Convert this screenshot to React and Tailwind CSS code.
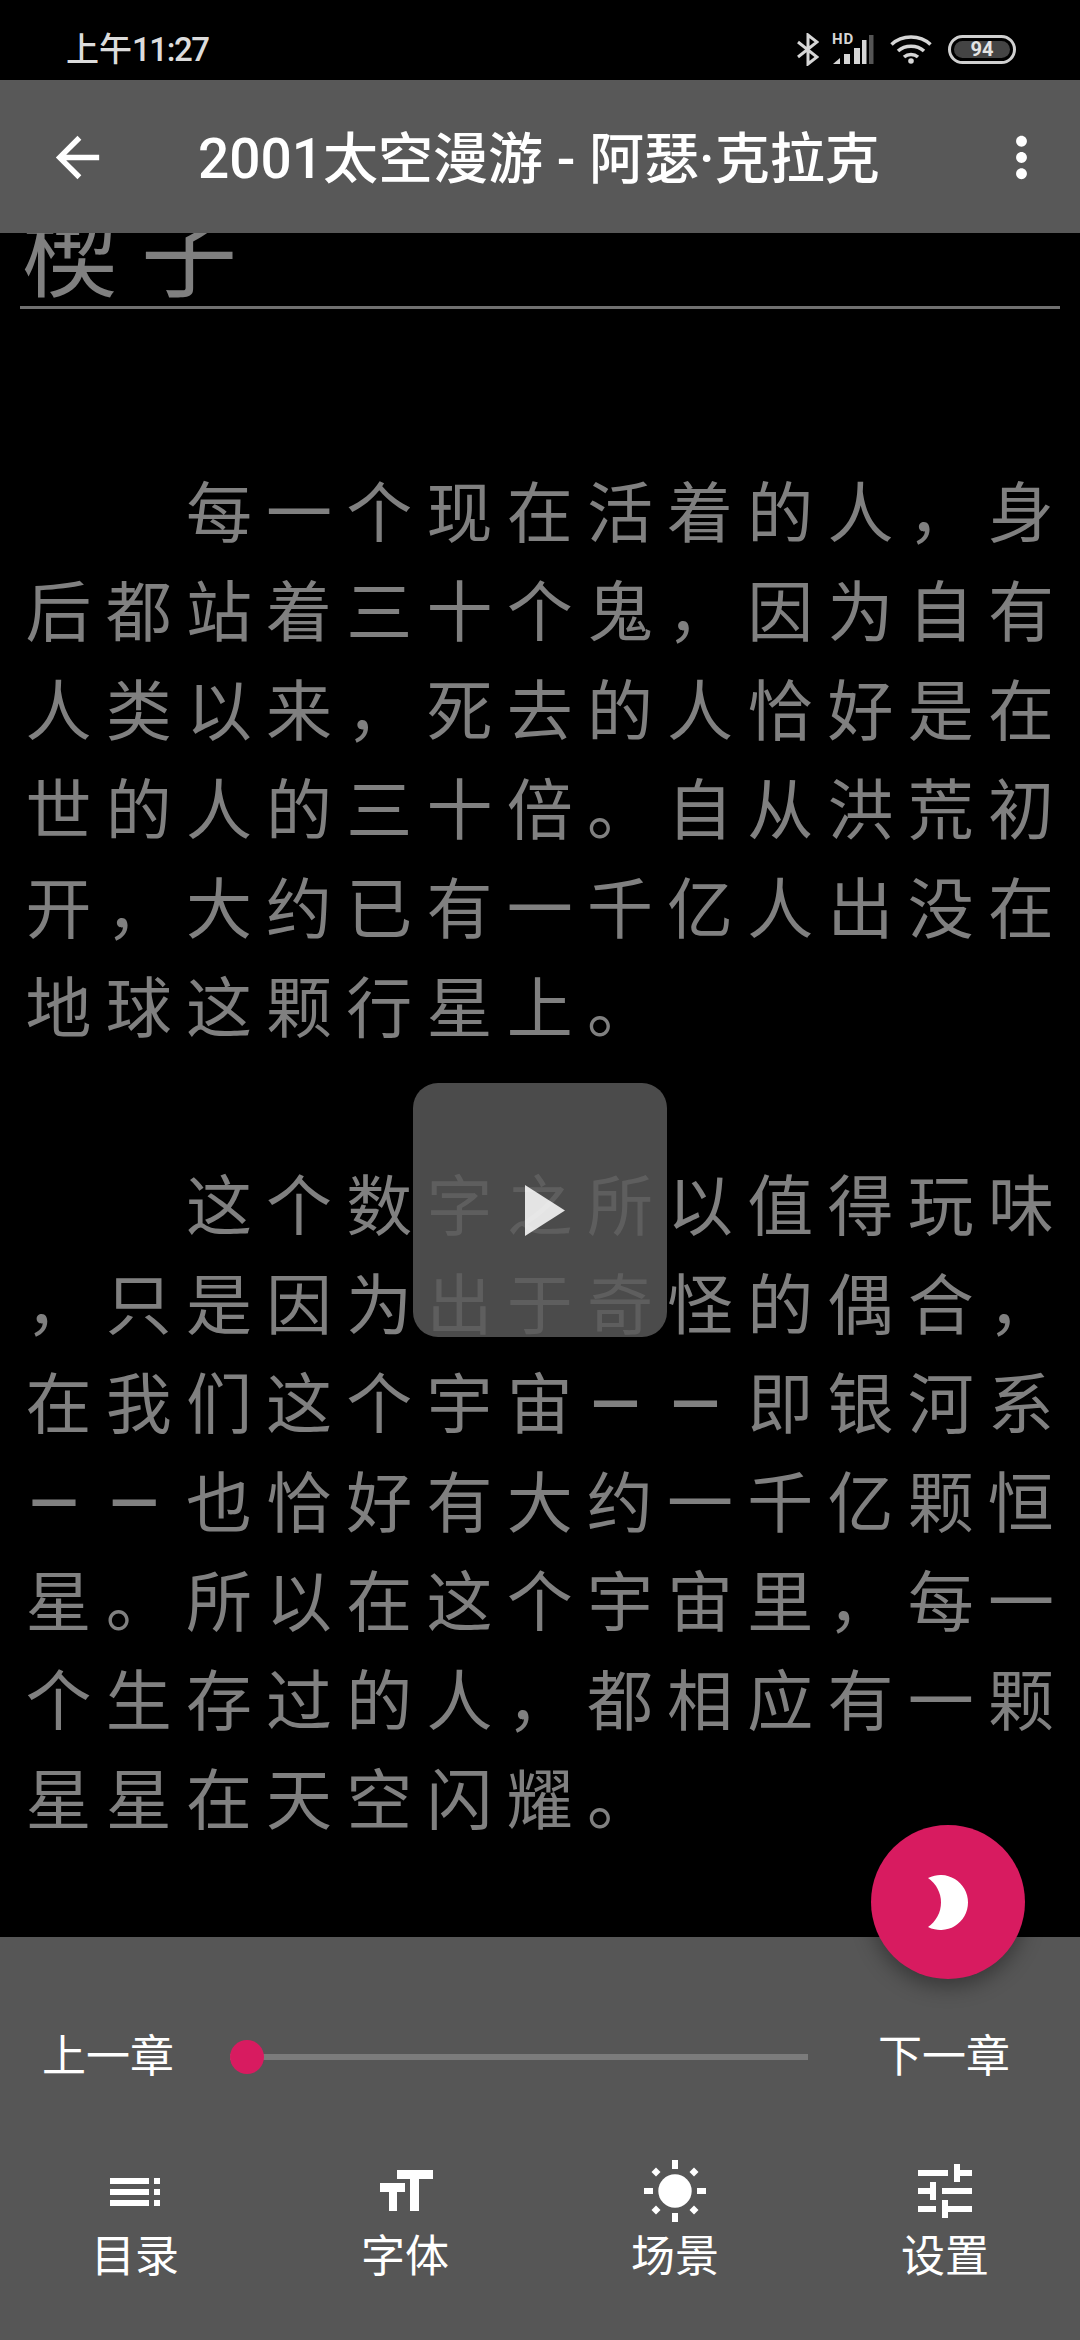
const fontStack = 'font-["Roboto","Noto_Sans_CJK_SC",sans-serif]';

const paragraphs = [
  [
    '　　每一个现在活着的人，身',
    '后都站着三十个鬼，因为自有',
    '人类以来，死去的人恰好是在',
    '世的人的三十倍。自从洪荒初',
    '开，大约已有一千亿人出没在',
    '地球这颗行星上。',
  ],
  [
    '　　这个数字之所以值得玩味',
    '，只是因为出于奇怪的偶合，',
    '在我们这个宇宙––即银河系',
    '––也恰好有大约一千亿颗恒',
    '星。所以在这个宇宙里，每一',
    '个生存过的人，都相应有一颗',
    '星星在天空闪耀。',
  ],
];

function BluetoothIcon() {
  return (
    <svg width="22" height="33" viewBox="0 0 22 33" fill="none" stroke="#d6d6d6" strokeWidth="3">
      <path d="M1 9l19 15-9 7V2l9 7L1 24" />
    </svg>
  );
}

function SignalIcon() {
  return (
    <div className="relative h-[31px] w-[42px]">
      <span className="absolute left-0 top-0 text-[15px] leading-[11px] font-bold tracking-[1px] text-[#d6d6d6]">HD</span>
      <svg className="absolute left-0 top-0" width="42" height="31" viewBox="0 0 42 31" fill="#d6d6d6">
        <path d="M1 30l7-6v6z" />
        <rect x="12" y="20" width="6" height="10" />
        <rect x="22" y="14" width="6" height="16" />
        <rect x="30" y="6" width="4.500" height="24" />
        <rect x="37" y="1" width="4.500" height="29" fill="#555" />
      </svg>
    </div>
  );
}

function WifiIcon() {
  return (
    <svg width="42" height="29" viewBox="0 0 42 29" fill="none" stroke="#d6d6d6" strokeWidth="3.5">
      <path d="M1.500 9.500C12 -0.500 30 -0.500 40.500 9.500" />
      <path d="M8 16C15 9.500 27 9.500 34 16" />
      <path d="M14 22C18 18.500 24 18.500 28 22" />
      <circle cx="21" cy="26" r="2.800" fill="#d6d6d6" stroke="none" />
    </svg>
  );
}

function Battery() {
  return (
    <div className="flex h-[29px] w-[68px] items-center rounded-full border-[3px] border-[#d0d0d0] p-[3px]">
      <div className={`flex h-full w-full items-center justify-center rounded-full bg-[#444444] text-[20px] leading-none font-bold text-[#e4e4e4] ${fontStack}`}>
        94
      </div>
    </div>
  );
}

function ListIcon() {
  return (
    <svg width="72" height="72" viewBox="0 0 72 72" fill="#fff">
      <rect x="11" y="23" width="39" height="6" />
      <rect x="55" y="23" width="6" height="6" />
      <rect x="11" y="34" width="39" height="6" />
      <rect x="55" y="34" width="6" height="6" />
      <rect x="11" y="45" width="39" height="6" />
      <rect x="55" y="45" width="6" height="6" />
    </svg>
  );
}

function FontIcon() {
  return (
    <svg width="72" height="72" viewBox="0 0 72 72" fill="#fff">
      <path d="M28 15h36v9H50v32h-9V24H28z" />
      <path d="M11 28h25v9h-8v19h-8V37h-9z" />
    </svg>
  );
}

function SunIcon() {
  return (
    <svg width="72" height="72" viewBox="0 0 72 72" fill="#fff">
      <circle cx="36" cy="36" r="16.700" />
      <rect x="33" y="5" width="6" height="9" />
      <rect x="33" y="58" width="6" height="9" />
      <rect x="5" y="33" width="9" height="6" />
      <rect x="58" y="33" width="9" height="6" />
      <path d="M17 12.500l4.500 4.500-4.500 4.500-4.500-4.500z" />
      <path d="M55 12.500l4.500 4.500-4.500 4.500-4.500-4.500z" />
      <path d="M17 50.500l4.500 4.500-4.500 4.500-4.500-4.500z" />
      <path d="M55 50.500l4.500 4.500-4.500 4.500-4.500-4.500z" />
    </svg>
  );
}

function TuneIcon() {
  return (
    <svg width="72" height="72" viewBox="0 0 24 24" fill="#fff">
      <path d="M3 17v2h6v-2H3zM3 5v2h10V5H3zm10 16v-2h8v-2h-8v-2h-2v6h2zM7 9v2H3v2h4v2h2V9H7zm14 4v-2H11v2h10zm-6-4h2V7h4V5h-4V3h-2v6z" />
    </svg>
  );
}

const navItems = [
  { label: '目录', icon: <ListIcon /> },
  { label: '字体', icon: <FontIcon /> },
  { label: '场景', icon: <SunIcon /> },
  { label: '设置', icon: <TuneIcon /> },
];

export default function App() {
  return (
    <div className={`relative flex h-[2340px] w-[1080px] flex-col overflow-hidden bg-black ${fontStack}`}>
      {/* status bar */}
      <div className="flex h-20 shrink-0 items-center justify-between pr-16 pl-[66px] pt-[20px] pb-[2px]">
        <span className="text-[33px] leading-none font-medium text-[#dcdcdc]">
          上午<span className="tracking-[-1.4px]">11:27</span>
        </span>
        <div className="flex items-center gap-[16px]">
          <div className="flex items-center gap-[13px]">
            <BluetoothIcon />
            <SignalIcon />
          </div>
          <WifiIcon />
          <Battery />
        </div>
      </div>

      {/* toolbar */}
      <div className="flex h-[153px] shrink-0 items-center bg-[#585858] pt-[2px] pl-[45px] pr-[26px]">
        <svg width="65" height="65" viewBox="0 0 24 24" fill="#fff">
          <path d="M20 11H7.830l5.590-5.590L12 4l-8 8 8 8 1.410-1.410L7.830 13H20v-2z" />
        </svg>
        <h1 className="mt-[3px] ml-[88px] flex-1 text-[55px] leading-none font-medium whitespace-nowrap text-white">
          2001太空漫游 - 阿瑟·克拉克
        </h1>
        <svg width="65" height="65" viewBox="0 0 24 24" fill="#fff">
          <path d="M12 8c1.100 0 2-.9 2-2s-.9-2-2-2-2 .9-2 2 .9 2 2 2zm0 2c-1.100 0-2 .9-2 2s.9 2 2 2 2-.9 2-2-.9-2-2-2zm0 6c-1.100 0-2 .9-2 2s.9 2 2 2 2-.9 2-2-.9-2-2-2z" />
        </svg>
      </div>

      {/* chapter text */}
      <main className="min-h-0 flex-1 overflow-hidden">
        <div className="mx-5 flex h-[76px] items-end border-b-[3px] border-[#707070]">
          <h2 className="pb-[2px] pl-[2px] text-[96px] leading-[96px] tracking-[23px] whitespace-nowrap text-[#808080]">楔子</h2>
        </div>
        <div className="mt-[156px] flex flex-col gap-[99px] pl-[25.5px]">
          {paragraphs.map((lines, i) => (
            <p key={i} className="text-[66px] leading-[99px] tracking-[14.2px] text-[#808080]">
              {lines.map((line) => (
                <span key={line} className="block whitespace-nowrap">
                  {line.split(/(–)/).map((part, j) =>
                    part === '–' ? (
                      <span key={j} className="inline-block w-[80.2px] align-[-7px] text-[88px] leading-[0]">–</span>
                    ) : (
                      part
                    ),
                  )}
                </span>
              ))}
            </p>
          ))}
        </div>
      </main>

      {/* bottom panel */}
      <div className="h-[403px] shrink-0 bg-[#565656] pt-[90px]">
        <div className="flex h-[60px] items-center justify-between pr-[70px] pl-[42px] text-[44px] leading-none text-white">
          <span>上一章</span>
          <div className="relative mr-[70px] ml-[56px] h-[6px] flex-1 bg-[#7b7b7b]">
            <div className="absolute top-[-14px] left-0 h-[34px] w-[34px] rounded-full bg-[#d81b60]" />
          </div>
          <span>下一章</span>
        </div>
        <div className="mt-[68px] grid grid-cols-4">
          {navItems.map((item) => (
            <div key={item.label} className="flex flex-col items-center">
              {item.icon}
              <span className="mt-[6px] text-[44px] leading-[48px] text-white">{item.label}</span>
            </div>
          ))}
        </div>
      </div>

      {/* play overlay */}
      <div className="absolute top-[1083px] left-[413px] flex h-[254px] w-[254px] items-center justify-center rounded-[25px] bg-[#585858]/85 pl-[10px]">
        <svg width="40" height="51" viewBox="0 0 40 51" fill="#fff" fillOpacity="0.85">
          <path d="M0 0l40 25.500L0 51z" />
        </svg>
      </div>

      {/* night mode button */}
      <button className="absolute top-[1825px] left-[871px] flex h-[154px] w-[154px] items-center justify-center rounded-full bg-[#d81b60] shadow-[0_8px_20px_rgba(0,0,0,0.35)]">
        <svg width="41" height="55" viewBox="0 0 41 55" fill="#fff">
          <path d="M0 3A27.500 27.500 0 1 1 0 52A29.600 29.600 0 0 0 0 3z" />
        </svg>
      </button>
    </div>
  );
}
